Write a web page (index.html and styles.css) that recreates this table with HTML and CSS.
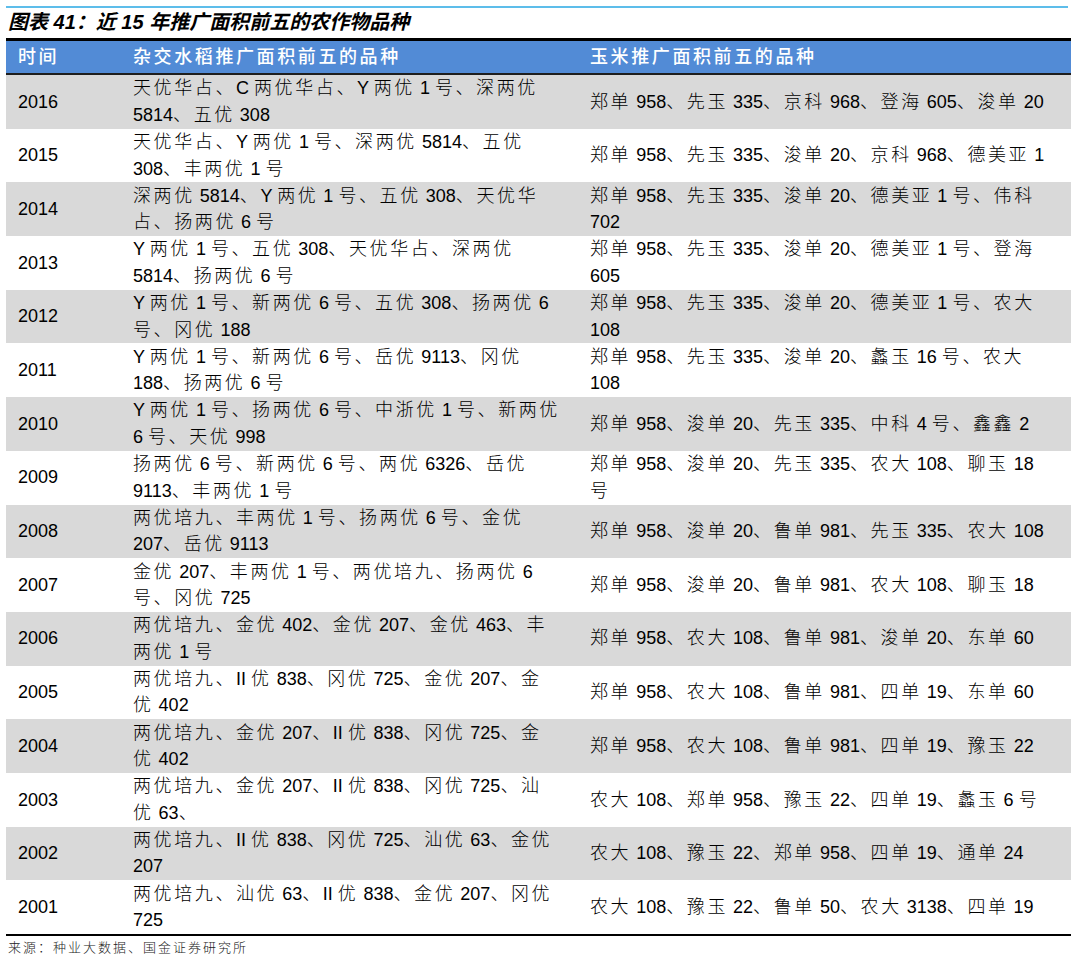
FILE: index.html
```html
<!DOCTYPE html>
<html lang="zh-CN">
<head>
<meta charset="utf-8">
<title>图表41</title>
<link rel="stylesheet" href="styles.css">
</head>
<body>
<div class="page">
  <div class="topline"></div>
  <div class="title">图表<span class="n"> 41</span>：近<span class="n"> 15 </span>年推广面积前五的农作物品种</div>
  <div class="table">
    <div class="head">
      <div class="cell">时间</div>
      <div class="cell">杂交水稻推广面积前五的品种</div>
      <div class="cell">玉米推广面积前五的品种</div>
    </div>
    <div class="rows">
      <div class="row">
        <div class="cell yr">2016</div>
        <div class="cell">天优华占、<span class="n">C </span>两优华占、<span class="n">Y </span>两优<span class="n"> 1 </span>号、深两优<br><span class="n">5814</span>、五优<span class="n"> 308</span></div>
        <div class="cell">郑单<span class="n"> 958</span>、先玉<span class="n"> 335</span>、京科<span class="n"> 968</span>、登海<span class="n"> 605</span>、浚单<span class="n"> 20</span></div>
      </div>
      <div class="row">
        <div class="cell yr">2015</div>
        <div class="cell">天优华占、<span class="n">Y </span>两优<span class="n"> 1 </span>号、深两优<span class="n"> 5814</span>、五优<br><span class="n">308</span>、丰两优<span class="n"> 1 </span>号</div>
        <div class="cell">郑单<span class="n"> 958</span>、先玉<span class="n"> 335</span>、浚单<span class="n"> 20</span>、京科<span class="n"> 968</span>、德美亚<span class="n"> 1</span></div>
      </div>
      <div class="row">
        <div class="cell yr">2014</div>
        <div class="cell">深两优<span class="n"> 5814</span>、<span class="n">Y </span>两优<span class="n"> 1 </span>号、五优<span class="n"> 308</span>、天优华<br>占、扬两优<span class="n"> 6 </span>号</div>
        <div class="cell">郑单<span class="n"> 958</span>、先玉<span class="n"> 335</span>、浚单<span class="n"> 20</span>、德美亚<span class="n"> 1 </span>号、伟科<br><span class="n">702</span></div>
      </div>
      <div class="row">
        <div class="cell yr">2013</div>
        <div class="cell"><span class="n">Y </span>两优<span class="n"> 1 </span>号、五优<span class="n"> 308</span>、天优华占、深两优<br><span class="n">5814</span>、扬两优<span class="n"> 6 </span>号</div>
        <div class="cell">郑单<span class="n"> 958</span>、先玉<span class="n"> 335</span>、浚单<span class="n"> 20</span>、德美亚<span class="n"> 1 </span>号、登海<br><span class="n">605</span></div>
      </div>
      <div class="row">
        <div class="cell yr">2012</div>
        <div class="cell"><span class="n">Y </span>两优<span class="n"> 1 </span>号、新两优<span class="n"> 6 </span>号、五优<span class="n"> 308</span>、扬两优<span class="n"> 6</span><br>号、冈优<span class="n"> 188</span></div>
        <div class="cell">郑单<span class="n"> 958</span>、先玉<span class="n"> 335</span>、浚单<span class="n"> 20</span>、德美亚<span class="n"> 1 </span>号、农大<br><span class="n">108</span></div>
      </div>
      <div class="row">
        <div class="cell yr">2011</div>
        <div class="cell"><span class="n">Y </span>两优<span class="n"> 1 </span>号、新两优<span class="n"> 6 </span>号、岳优<span class="n"> 9113</span>、冈优<br><span class="n">188</span>、扬两优<span class="n"> 6 </span>号</div>
        <div class="cell">郑单<span class="n"> 958</span>、先玉<span class="n"> 335</span>、浚单<span class="n"> 20</span>、蠡玉<span class="n"> 16 </span>号、农大<br><span class="n">108</span></div>
      </div>
      <div class="row">
        <div class="cell yr">2010</div>
        <div class="cell"><span class="n">Y </span>两优<span class="n"> 1 </span>号、扬两优<span class="n"> 6 </span>号、中浙优<span class="n"> 1 </span>号、新两优<br><span class="n">6 </span>号、天优<span class="n"> 998</span></div>
        <div class="cell">郑单<span class="n"> 958</span>、浚单<span class="n"> 20</span>、先玉<span class="n"> 335</span>、中科<span class="n"> 4 </span>号、鑫鑫<span class="n"> 2</span></div>
      </div>
      <div class="row">
        <div class="cell yr">2009</div>
        <div class="cell">扬两优<span class="n"> 6 </span>号、新两优<span class="n"> 6 </span>号、两优<span class="n"> 6326</span>、岳优<br><span class="n">9113</span>、丰两优<span class="n"> 1 </span>号</div>
        <div class="cell">郑单<span class="n"> 958</span>、浚单<span class="n"> 20</span>、先玉<span class="n"> 335</span>、农大<span class="n"> 108</span>、聊玉<span class="n"> 18</span><br>号</div>
      </div>
      <div class="row">
        <div class="cell yr">2008</div>
        <div class="cell">两优培九、丰两优<span class="n"> 1 </span>号、扬两优<span class="n"> 6 </span>号、金优<br><span class="n">207</span>、岳优<span class="n"> 9113</span></div>
        <div class="cell">郑单<span class="n"> 958</span>、浚单<span class="n"> 20</span>、鲁单<span class="n"> 981</span>、先玉<span class="n"> 335</span>、农大<span class="n"> 108</span></div>
      </div>
      <div class="row">
        <div class="cell yr">2007</div>
        <div class="cell">金优<span class="n"> 207</span>、丰两优<span class="n"> 1 </span>号、两优培九、扬两优<span class="n"> 6</span><br>号、冈优<span class="n"> 725</span></div>
        <div class="cell">郑单<span class="n"> 958</span>、浚单<span class="n"> 20</span>、鲁单<span class="n"> 981</span>、农大<span class="n"> 108</span>、聊玉<span class="n"> 18</span></div>
      </div>
      <div class="row">
        <div class="cell yr">2006</div>
        <div class="cell">两优培九、金优<span class="n"> 402</span>、金优<span class="n"> 207</span>、金优<span class="n"> 463</span>、丰<br>两优<span class="n"> 1 </span>号</div>
        <div class="cell">郑单<span class="n"> 958</span>、农大<span class="n"> 108</span>、鲁单<span class="n"> 981</span>、浚单<span class="n"> 20</span>、东单<span class="n"> 60</span></div>
      </div>
      <div class="row">
        <div class="cell yr">2005</div>
        <div class="cell">两优培九、<span class="n">II </span>优<span class="n"> 838</span>、冈优<span class="n"> 725</span>、金优<span class="n"> 207</span>、金<br>优<span class="n"> 402</span></div>
        <div class="cell">郑单<span class="n"> 958</span>、农大<span class="n"> 108</span>、鲁单<span class="n"> 981</span>、四单<span class="n"> 19</span>、东单<span class="n"> 60</span></div>
      </div>
      <div class="row">
        <div class="cell yr">2004</div>
        <div class="cell">两优培九、金优<span class="n"> 207</span>、<span class="n">II </span>优<span class="n"> 838</span>、冈优<span class="n"> 725</span>、金<br>优<span class="n"> 402</span></div>
        <div class="cell">郑单<span class="n"> 958</span>、农大<span class="n"> 108</span>、鲁单<span class="n"> 981</span>、四单<span class="n"> 19</span>、豫玉<span class="n"> 22</span></div>
      </div>
      <div class="row">
        <div class="cell yr">2003</div>
        <div class="cell">两优培九、金优<span class="n"> 207</span>、<span class="n">II </span>优<span class="n"> 838</span>、冈优<span class="n"> 725</span>、汕<br>优<span class="n"> 63</span>、</div>
        <div class="cell">农大<span class="n"> 108</span>、郑单<span class="n"> 958</span>、豫玉<span class="n"> 22</span>、四单<span class="n"> 19</span>、蠡玉<span class="n"> 6 </span>号</div>
      </div>
      <div class="row">
        <div class="cell yr">2002</div>
        <div class="cell">两优培九、<span class="n">II </span>优<span class="n"> 838</span>、冈优<span class="n"> 725</span>、汕优<span class="n"> 63</span>、金优<br><span class="n">207</span></div>
        <div class="cell">农大<span class="n"> 108</span>、豫玉<span class="n"> 22</span>、郑单<span class="n"> 958</span>、四单<span class="n"> 19</span>、通单<span class="n"> 24</span></div>
      </div>
      <div class="row">
        <div class="cell yr">2001</div>
        <div class="cell">两优培九、汕优<span class="n"> 63</span>、<span class="n">II </span>优<span class="n"> 838</span>、金优<span class="n"> 207</span>、冈优<br><span class="n">725</span></div>
        <div class="cell">农大<span class="n"> 108</span>、豫玉<span class="n"> 22</span>、鲁单<span class="n"> 50</span>、农大<span class="n"> 3138</span>、四单<span class="n"> 19</span></div>
      </div>
    </div>
  </div>
  <div class="source">来源：种业大数据、国金证券研究所</div>
</div>
</body>
</html>
```

FILE: styles.css
```css
* {
  box-sizing: border-box;
}

body {
  margin: 0;
  background: #ffffff;
  color: #000000;
  font-family: "Liberation Sans", "Noto Sans CJK SC", sans-serif;
}

.page {
  width: 1065px;
  margin-left: 6px;
  padding-top: 6px;
}

.topline {
  height: 2px;
  margin-right: 3px;
  background: #5dbdea;
}

.title {
  height: 30px;
  padding-left: 2px;
  font-size: 20px;
  line-height: 28px;
  font-weight: bold;
  font-style: italic;
  white-space: nowrap;
}

.table {
  border-top: 3px solid #000000;
  border-bottom: 2px solid #000000;
}

.head,
.row {
  display: grid;
  grid-template-columns: 115px 457px 1fr;
  align-items: center;
}

.head {
  height: 34px;
  background: #528bd6;
  border-bottom: 2px solid #1e1e1e;
  color: #ffffff;
}

.head .cell {
  font-weight: 500;
  line-height: 32px;
}

.row {
  height: 53.6875px;
}

.rows .row:nth-child(odd) {
  background: #d9d9d9;
}

.cell {
  padding-left: 12px;
  font-size: 18px;
  line-height: 26.5px;
  letter-spacing: 2.6px;
  font-weight: 300;
  white-space: nowrap;
}

.cell.yr {
  letter-spacing: 0;
}

.n {
  letter-spacing: 0;
}

.source {
  margin-top: 3px;
  padding-left: 2px;
  font-size: 13px;
  line-height: 18px;
  letter-spacing: 2px;
  font-weight: 300;
  color: #222222;
}
```
